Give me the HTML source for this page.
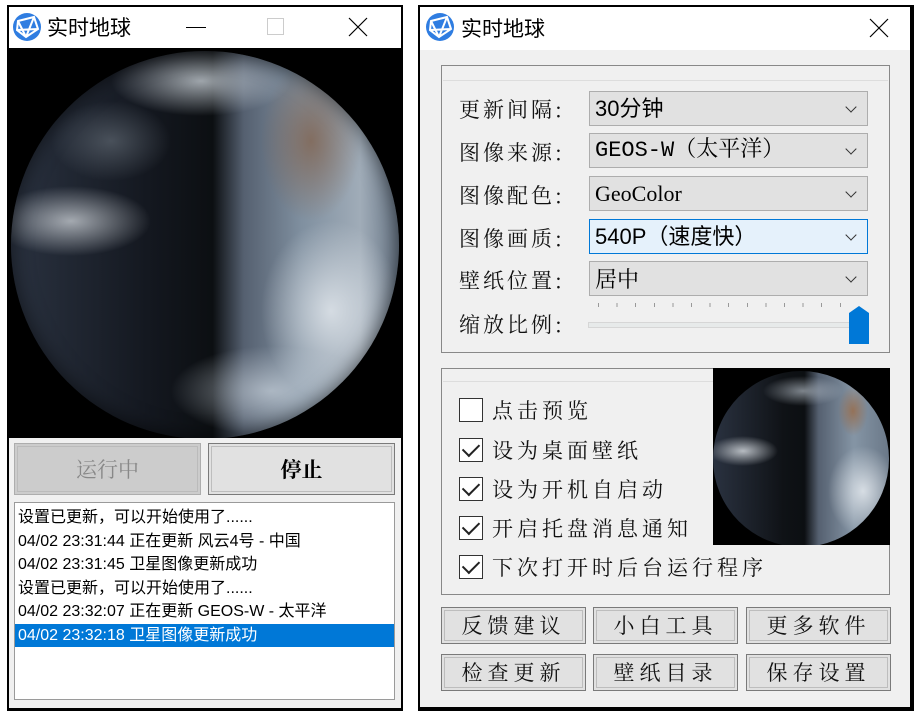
<!DOCTYPE html>
<html><head><meta charset="utf-8"><style>
*{margin:0;padding:0;box-sizing:border-box}
body{width:919px;height:715px;background:#fff;position:relative;overflow:hidden;font-family:"Liberation Sans","Noto Sans CJK SC",sans-serif}
.a{position:absolute}
.kai{font-family:"Noto Serif CJK SC","Liberation Serif",serif;color:#111}
.combo{position:absolute;left:589px;width:279px;height:35px;background:#e1e1e1;border:1px solid #adadad;font-size:22px;line-height:33px;padding-left:5px;color:#000}
.combo:after{content:"";position:absolute;right:12px;top:11px;width:7px;height:7px;border-right:1.3px solid #333;border-bottom:1.3px solid #333;transform:rotate(45deg)}
.lbl{position:absolute;left:459px;font-size:21px;letter-spacing:3px}
.cb{position:absolute;left:459px;width:24px;height:24px;border:1.5px solid #333;background:#fff}
.cb.c:after{content:"";position:absolute;left:6px;top:1px;width:8px;height:14px;border-right:2px solid #222;border-bottom:2px solid #222;transform:rotate(45deg)}
.ct{position:absolute;left:492px;font-size:21px;letter-spacing:4px}
.btn{position:absolute;width:145px;height:37px;background:#e1e1e1;border:1px solid #7a7a7a;box-shadow:inset 0 0 0 2px #e1e1e1,inset 0 0 0 3px #bdbdbd;font-size:21px;text-align:center;line-height:35px;letter-spacing:5px}
.log div{height:23.5px;font-size:16px;line-height:23px;padding-left:3px;white-space:nowrap;color:#000}
</style></head><body>
<!-- left window -->
<div class="a" style="left:7px;top:5px;width:396px;height:706px;background:#000"></div>
<div class="a" style="left:9px;top:7px;width:392px;height:41px;background:#fff"></div>
<svg class="a" style="left:12px;top:12px" width="30" height="30" viewBox="0 0 30 30"><circle cx="15" cy="15" r="14" fill="#2f7de1"/><path d="M6 9 L22 5 L26 17 L14 25 L5 18 Z M6 9 L14 25 M22 5 L14 25 M5 18 L26 17" stroke="#fff" stroke-width="2" fill="none"/></svg>
<div class="a" style="left:47px;top:12px;font-size:21px;color:#000">实时地球</div>
<div class="a" style="left:186px;top:27px;width:20px;height:1px;background:#000"></div>
<div class="a" style="left:267px;top:18px;width:17px;height:17px;border:1px solid #ccc"></div>
<svg class="a" style="left:348px;top:17px" width="20" height="20"><path d="M1 1L19 19M19 1L1 19" stroke="#000" stroke-width="1.2"/></svg>
<div class="a" style="left:9px;top:48px;width:392px;height:390px;background:#000;overflow:hidden">
<div class="a" style="left:2px;top:3px;width:388px;height:388px;border-radius:50%;background:
radial-gradient(ellipse 90px 35px at 190px 30px,rgba(220,228,235,.7),transparent),
radial-gradient(ellipse 50px 80px at 300px 90px,rgba(130,100,80,.8),transparent),
radial-gradient(ellipse 70px 90px at 320px 260px,rgba(230,235,240,.8),transparent),
radial-gradient(ellipse 80px 35px at 60px 170px,rgba(220,225,230,.7),transparent),
radial-gradient(ellipse 100px 45px at 260px 340px,rgba(200,210,220,.7),transparent),
radial-gradient(ellipse 60px 40px at 100px 90px,rgba(120,130,140,.5),transparent),
linear-gradient(90deg,#2a3240 0%,#141820 35%,#0c0f12 52%,#556070 60%,#8090a0 75%,#a0acb8 90%,#6a7888 100%);box-shadow:inset 0 0 20px rgba(0,0,0,.6)"></div>
</div>
<div class="a" style="left:9px;top:438px;width:392px;height:270px;background:#f0f0f0"></div>
<div class="a" style="left:14px;top:443px;width:187px;height:52px;background:#ccc;border:1px solid #adadad;box-shadow:inset 0 0 0 2px #ccc,inset 0 0 0 3px #bbb;text-align:center;line-height:50px;font-size:21px;color:#888;font-family:'Noto Serif CJK SC',serif">运行中</div>
<div class="a" style="left:208px;top:443px;width:187px;height:52px;background:#e1e1e1;border:1px solid #7a7a7a;box-shadow:inset 0 0 0 2px #e1e1e1,inset 0 0 0 3px #bdbdbd;text-align:center;line-height:50px;font-size:21px;font-weight:bold;font-family:'Noto Serif CJK SC',serif">停止</div>
<div class="a log" style="left:14px;top:502px;width:381px;height:198px;background:#fff;border:1px solid #9a9a9a;padding-top:3px">
<div>设置已更新，可以开始使用了......</div>
<div>04/02 23:31:44 正在更新 风云4号 - 中国</div>
<div>04/02 23:31:45 卫星图像更新成功</div>
<div>设置已更新，可以开始使用了......</div>
<div>04/02 23:32:07 正在更新 GEOS-W - 太平洋</div>
<div style="background:#0078d7;color:#fff">04/02 23:32:18 卫星图像更新成功</div>
</div>
<!-- right window -->
<div class="a" style="left:418px;top:5px;width:496px;height:706px;background:#000"></div>
<div class="a" style="left:420px;top:7px;width:490px;height:43px;background:#fff"></div>
<div class="a" style="left:420px;top:50px;width:490px;height:657px;background:#f0f0f0"></div>
<svg class="a" style="left:425px;top:12px" width="30" height="30" viewBox="0 0 30 30"><circle cx="15" cy="15" r="14" fill="#2f7de1"/><path d="M6 9 L22 5 L26 17 L14 25 L5 18 Z M6 9 L14 25 M22 5 L14 25 M5 18 L26 17" stroke="#fff" stroke-width="2" fill="none"/></svg>
<div class="a" style="left:461px;top:13px;font-size:21px">实时地球</div>
<svg class="a" style="left:869px;top:18px" width="20" height="20"><path d="M1 1L19 19M19 1L1 19" stroke="#000" stroke-width="1.2"/></svg>
<div class="a" style="left:441px;top:65px;width:449px;height:288px;border:1px solid #888"></div>
<div class="a" style="left:443px;top:80px;width:445px;height:1px;background:#ddd"></div>
<div class="lbl kai" style="top:94px">更新间隔:</div>
<div class="lbl kai" style="top:137px">图像来源:</div>
<div class="lbl kai" style="top:180px">图像配色:</div>
<div class="lbl kai" style="top:223px">图像画质:</div>
<div class="lbl kai" style="top:265px">壁纸位置:</div>
<div class="lbl kai" style="top:309px">缩放比例:</div>
<div class="combo" style="top:91px">30分钟</div>
<div class="combo" style="top:133px;font-family:'Liberation Mono','Noto Serif CJK SC',monospace">GEOS-W（太平洋）</div>
<div class="combo" style="top:176px;font-family:'Liberation Serif',serif">GeoColor</div>
<div class="combo" style="top:219px;background:#e5f1fb;border-color:#0078d7">540P（速度快）</div>
<div class="combo kai" style="top:261px">居中</div>
<div class="a" style="left:588px;top:322px;width:272px;height:6px;background:#e7eaea;border:1px solid #d6d6d6"></div>
<div class="a" style="left:598px;top:303px;width:256px;height:4px;background:repeating-linear-gradient(90deg,#999 0 1px,transparent 1px 18.6px)"></div>
<svg class="a" style="left:849px;top:306px" width="20" height="38"><path d="M0 7L10 0L20 7V38H0Z" fill="#0078d7"/></svg>
<div class="a" style="left:441px;top:368px;width:449px;height:227px;border:1px solid #888"></div>
<div class="a" style="left:443px;top:381px;width:270px;height:1px;background:#ddd"></div>
<div class="a" style="left:713px;top:368px;width:177px;height:177px;background:#000;overflow:hidden">
<div class="a" style="left:0;top:3px;width:176px;height:176px;border-radius:50%;background:
radial-gradient(ellipse 15px 25px at 140px 40px,rgba(150,110,80,.9),transparent),
radial-gradient(ellipse 35px 45px at 150px 120px,rgba(230,235,240,.85),transparent),
radial-gradient(ellipse 35px 15px at 30px 80px,rgba(220,225,230,.8),transparent),
radial-gradient(ellipse 40px 15px at 90px 20px,rgba(200,210,220,.6),transparent),
linear-gradient(90deg,#2a3240 0%,#0f1216 40%,#0c0f12 52%,#556070 60%,#8595a5 80%,#6a7888 100%)"></div>
</div>
<div class="cb" style="top:398px"></div><div class="ct kai" style="top:395px">点击预览</div>
<div class="cb c" style="top:438px"></div><div class="ct kai" style="top:435px">设为桌面壁纸</div>
<div class="cb c" style="top:477px"></div><div class="ct kai" style="top:474px">设为开机自启动</div>
<div class="cb c" style="top:516px"></div><div class="ct kai" style="top:513px">开启托盘消息通知</div>
<div class="cb c" style="top:555px"></div><div class="ct kai" style="top:552px">下次打开时后台运行程序</div>
<div class="btn kai" style="left:441px;top:607px">反馈建议</div>
<div class="btn kai" style="left:593px;top:607px">小白工具</div>
<div class="btn kai" style="left:746px;top:607px">更多软件</div>
<div class="btn kai" style="left:441px;top:654px">检查更新</div>
<div class="btn kai" style="left:593px;top:654px">壁纸目录</div>
<div class="btn kai" style="left:746px;top:654px">保存设置</div>
</body></html>
